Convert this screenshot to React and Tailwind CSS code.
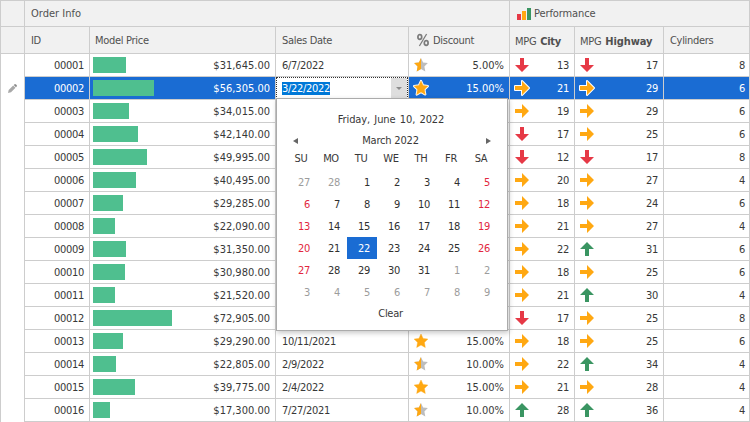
import { useState } from 'react';

const cars = [
  { id: '00001', price: 31645, date: '6/7/2022',   discount: 5,  city: 13, highway: 17, cylinders: 8 },
  { id: '00002', price: 56305, date: '3/22/2022',  discount: 15, city: 21, highway: 29, cylinders: 6 },
  { id: '00003', price: 34015, city: 19, highway: 29, cylinders: 6 },
  { id: '00004', price: 42140, city: 17, highway: 25, cylinders: 6 },
  { id: '00005', price: 49995, city: 12, highway: 17, cylinders: 8 },
  { id: '00006', price: 40495, city: 20, highway: 27, cylinders: 4 },
  { id: '00007', price: 29285, city: 18, highway: 24, cylinders: 6 },
  { id: '00008', price: 22090, city: 21, highway: 27, cylinders: 4 },
  { id: '00009', price: 31350, city: 22, highway: 31, cylinders: 6 },
  { id: '00010', price: 30980, city: 18, highway: 25, cylinders: 6 },
  { id: '00011', price: 21520, city: 21, highway: 30, cylinders: 4 },
  { id: '00012', price: 72905, city: 17, highway: 25, cylinders: 8 },
  { id: '00013', price: 29290, date: '10/11/2021', discount: 15, city: 18, highway: 25, cylinders: 6 },
  { id: '00014', price: 22805, date: '2/9/2022',   discount: 10, city: 22, highway: 34, cylinders: 4 },
  { id: '00015', price: 39775, date: '2/4/2022',   discount: 15, city: 21, highway: 28, cylinders: 4 },
  { id: '00016', price: 17300, date: '7/27/2021',  discount: 10, city: 28, highway: 36, cylinders: 4 },
];

const gridCols = 'grid grid-cols-[24px_65px_186px_133px_101px_65px_89px_85px]';
const cellCls = 'border-r border-b border-[#cdcdcd] flex items-center';
const headCls = 'border-r border-b border-[#cdcdcd] flex items-center bg-[#f1f1f1] text-[#505050]';

const money = (n) => '$' + n.toLocaleString('en-US', { minimumFractionDigits: 2 });
const barWidth = (price) => Math.round(17.05 + (price - 17300) * 0.001115);

function Arrow({ value, high, active }) {
  const dir = value < 18 ? 'down' : value >= high ? 'up' : 'right';
  const color = { down: '#e63946', up: '#3a9562', right: '#ffa812' }[dir];
  const d = {
    down: 'M6 1h4v7h5L8 15 1 8h5z',
    up: 'M6 15h4V8h5L8 1 1 8h5z',
    right: 'M1 6v4h7v5l7-7-7-7v5z',
  }[dir];
  return (
    <svg width="16" height="16" viewBox="0 0 16 16" className="overflow-visible">
      {active && <path d={d} fill="#fff" stroke="#fff" strokeWidth="2" strokeLinejoin="round" />}
      <path d={d} fill={color} />
    </svg>
  );
}

function Star({ half, active }) {
  const d = 'M8 1l2.1 4.4 4.8.7-3.5 3.3.9 5.1L8 12.1l-4.3 2.4.9-5.1L1.1 6.1l4.8-.7z';
  return (
    <svg width="16" height="16" viewBox="0 0 16 16" className="overflow-visible">
      {active && <path d={d} fill="#fff" stroke="#fff" strokeWidth="2.2" strokeLinejoin="round" />}
      <path d={d} fill={half ? '#bdbdbd' : '#ffa812'} stroke={half ? 'none' : '#ffa812'} strokeWidth="0.4" />
      {half && <path d="M8 1v11.1l-4.3 2.4.9-5.1L1.1 6.1l4.8-.7z" fill="#ffa812" />}
    </svg>
  );
}

function PercentIcon() {
  return (
    <svg width="16" height="16" viewBox="0 0 16 16" fill="none" stroke="#7b7b7b">
      <ellipse cx="4.8" cy="5" rx="1.9" ry="2.3" strokeWidth="1.7" />
      <ellipse cx="11.2" cy="11" rx="1.9" ry="2.3" strokeWidth="1.7" />
      <path d="M11.6 2L4.4 14" strokeWidth="1.3" />
    </svg>
  );
}

function ChartIcon() {
  return (
    <svg width="16" height="16" viewBox="0 0 16 16">
      <path d="M1 8h4v6H1z" fill="#e63946" />
      <path d="M6 5h4v9H6z" fill="#ffa812" />
      <path d="M11 2h4v12h-4z" fill="#3a9562" />
    </svg>
  );
}

function PencilIcon() {
  return (
    <svg width="9" height="9" viewBox="0 0 9 9">
      <path d="M0 9l.7-3L5.2 1.5l2.3 2.3L3 8.3z" fill="#a8a8a8" />
      <path d="M5.8.9l.7-.7h1.3l1 1v1.1l-.8.9z" fill="#888" />
    </svg>
  );
}

function DateEditor({ value }) {
  return (
    <div className="relative flex h-[22px] flex-1 items-center justify-between border border-b-0 border-dotted border-[#303030] bg-white pl-[5px]">
      <span className="h-[13px] bg-[#0078d7] leading-[14px] text-white">{value}</span>
      <button className="flex h-full w-4 items-center justify-center bg-[#dedede]">
        <svg width="6" height="3" viewBox="0 0 6 3"><path d="M0 0h6L3 3z" fill="#8c8c8c" /></svg>
      </button>
      <Calendar />
    </div>
  );
}

function Calendar() {
  const [selected, setSelected] = useState(22);
  // March 2022 starts on Tuesday, so the first cell is February 27
  const days = Array.from({ length: 42 }, (_, i) => new Date(2022, 1, 27 + i));
  const color = (d) => {
    if (d.getMonth() !== 2) return 'text-[#9c9c9c]';
    if (d.getDate() === selected) return 'bg-[#1a6cd3] text-white';
    return d.getDay() % 6 === 0 ? 'text-[#e22740]' : 'text-[#303030]';
  };
  return (
    <div className="absolute -left-px top-5 z-10 flex h-[233px] w-[232px] flex-col border border-[#ababab] bg-white px-[10px] pt-[9px] text-[#383838] shadow-[1px_2px_5px_rgba(0,0,0,0.22)]">
      <div className="h-[22px] pr-[2px] text-center leading-[24px] tracking-[-0.1px] [word-spacing:1.2px]">Friday, June 10, 2022</div>
      <div className="flex h-[21px] items-center justify-between pl-[6px] pr-[6px]">
        <svg width="5" height="6" viewBox="0 0 5 6"><path d="M5 0v6L0 3z" fill="#666" /></svg>
        <span className="mr-[3px] leading-[14px] tracking-[-0.2px]">March 2022</span>
        <svg width="5" height="6" viewBox="0 0 5 6"><path d="M0 0v6l5-3z" fill="#666" /></svg>
      </div>
      <div className="grid h-5 grid-cols-7 pb-1">
        {['SU', 'MO', 'TU', 'WE', 'TH', 'FR', 'SA'].map(d => (
          <span key={d} className="pr-[2px] text-center leading-[16px]">{d}</span>
        ))}
      </div>
      <div className="grid grid-cols-7">
        {days.map((d, i) => (
          <button key={i} onClick={() => setSelected(d.getDate())}
            className={`h-[22px] pr-[7px] text-right leading-[24px] ${color(d)}`}>
            {d.getDate()}
          </button>
        ))}
      </div>
      <button className="h-[22px] pr-[3px] leading-[22px]">Clear</button>
    </div>
  );
}

function Row({ car, active }) {
  const bg = active ? 'bg-[#1a6cd3] text-white' : 'bg-white text-[#383838]';
  return (
    <div className={`${gridCols} h-[23px] leading-[14px]`}>
      <div className="flex items-center justify-center border-r border-[#cdcdcd] bg-white">
        {active && <PencilIcon />}
      </div>
      <div className={`${cellCls} ${bg} justify-end pr-[5px] pt-[2px]`}>{car.id}</div>
      <div className={`${cellCls} ${bg} justify-between pl-[3px] pr-[5px]`}>
        <div className="h-4 bg-[#4fbf8f]" style={{ width: barWidth(car.price) }} />
        <span className="pt-[2px] tracking-[0px]">{money(car.price)}</span>
      </div>
      <div className={`${cellCls} ${bg} ${active ? '' : 'pl-[6px] pt-[2px]'}`}>
        {active ? <DateEditor value={car.date} /> : car.date}
      </div>
      <div className={`${cellCls} ${bg} justify-between pl-[4px] pr-[5px]`}>
        {car.discount && <Star half={car.discount < 15} active={active} />}
        {car.discount && <span className="pt-[2px] tracking-[0px]">{car.discount.toFixed(2)}%</span>}
      </div>
      <div className={`${cellCls} ${bg} justify-between pl-[4px] pr-[5px]`}>
        <Arrow value={car.city} high={25} active={active} />
        <span className="pt-[2px]">{car.city}</span>
      </div>
      <div className={`${cellCls} ${bg} justify-between pl-[4px] pr-[5px]`}>
        <Arrow value={car.highway} high={30} active={active} />
        <span className="pt-[2px]">{car.highway}</span>
      </div>
      <div className={`${cellCls} ${bg} justify-end border-r-0 pr-[4px] pt-[2px]`}>{car.cylinders}</div>
    </div>
  );
}

export default function App() {
  return (
    <div className="h-[422px] w-[750px] overflow-hidden border border-b-0 border-[#cdcdcd] bg-white font-[family-name:'DejaVu_Sans_Condensed','DejaVu_Sans',sans-serif] text-[11px] tracking-[-0.3px] [font-stretch:condensed]">
      {/* Bands */}
      <div className="flex h-[26px] leading-[14px]">
        <div className={`${headCls} w-6`} />
        <div className={`${headCls} w-[485px] pl-[6px] tracking-[0px]`}>Order Info</div>
        <div className={`${headCls} w-[239px] gap-[2px] border-r-0 pl-[6px]`}>
          <ChartIcon />
          <span className="tracking-[-0.1px]">Performance</span>
        </div>
      </div>

      {/* Column headers */}
      <div className={`${gridCols} h-[27px] leading-[14px]`}>
        <div className={headCls} />
        <div className={`${headCls} pl-[6px] pt-[2px]`}>ID</div>
        <div className={`${headCls} pl-[5px] pt-[2px]`}>Model Price</div>
        <div className={`${headCls} pl-[6px] pt-[2px]`}>Sales Date</div>
        <div className={`${headCls} gap-[2px] pl-[6px]`}><PercentIcon /><span className="pt-[2px]">Discount</span></div>
        <div className={`${headCls} gap-[4px] pl-[5px] pt-[3px]`}>MPG <b>City</b></div>
        <div className={`${headCls} gap-[4px] pl-[5px] pt-[3px]`}>MPG <b className="tracking-[-0.1px]">Highway</b></div>
        <div className={`${headCls} border-r-0 pl-[6px] pt-[2px]`}>Cylinders</div>
      </div>

      {cars.map(car => <Row key={car.id} car={car} active={car.id === '00002'} />)}
    </div>
  );
}
